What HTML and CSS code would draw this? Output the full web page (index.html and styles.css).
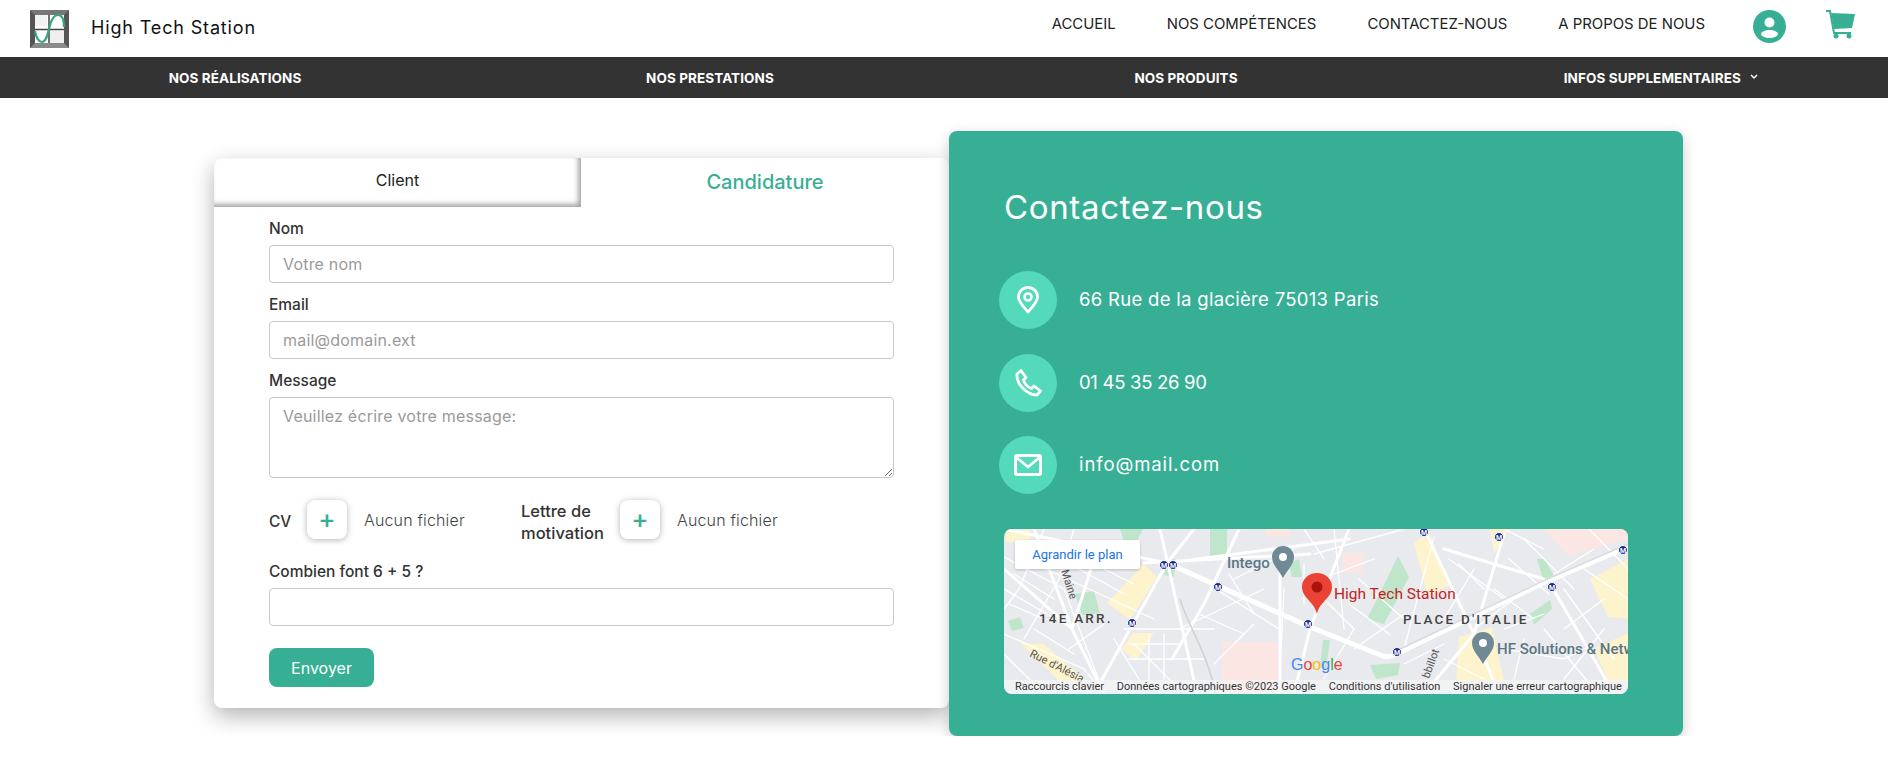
FILE: index.html
```html
<!DOCTYPE html>
<html lang="fr">
<head>
    <meta charset="UTF-8">
    <title>High Tech Station - Contactez-nous</title>
    <link rel="stylesheet" href="styles.css">
</head>
<body>
    <header class="top-bar">
        <a class="brand" href="#">
            <svg class="brand-logo" viewBox="0 0 39 38">
                <rect width="39" height="38" fill="#555"/>
                <polygon points="0,0 39,0 34,5 5,5" fill="#777"/>
                <polygon points="0,38 39,38 34,33 5,33" fill="#8a8a8a"/>
                <rect x="5" y="5" width="29" height="28" fill="#fff"/>
                <rect x="5" y="5" width="12" height="11" fill="#f2f2f2"/>
                <rect x="20" y="21" width="14" height="12" fill="#efefef"/>
                <path d="M19 5V33M5 19.500H34" stroke="#444" stroke-width="1.500"/>
                <path d="M5 21C6 28 9 32 12 32C16 32 17.500 25 19 19C20.500 12 23 5 28 5C32 5 34 10 34 17" fill="none" stroke="#36a67e" stroke-width="2.200"/>
            </svg>
            <span class="brand-name">High Tech Station</span>
        </a>
        <nav class="main-nav">
            <a href="#">ACCUEIL</a>
            <a href="#">NOS COMPÉTENCES</a>
            <a href="#">CONTACTEZ-NOUS</a>
            <a href="#">A PROPOS DE NOUS</a>
        </nav>
        <svg class="avatar" viewBox="0 0 33 33">
            <circle cx="16.500" cy="16.500" r="16.500" fill="#37af95"/>
            <circle cx="16.500" cy="12.500" r="5" fill="#fff"/>
            <ellipse cx="16.500" cy="24" rx="8.500" ry="4" fill="#fff"/>
        </svg>
        <svg class="cart" viewBox="0 0 29 29">
            <path d="M0 1H4L8 23H25" fill="none" stroke="#37af95" stroke-width="2"/>
            <polygon points="5,3 29,4 26,18 8,19" fill="#37af95"/>
            <circle cx="10" cy="26" r="2.500" fill="#37af95"/>
            <circle cx="23" cy="26" r="2.500" fill="#37af95"/>
        </svg>
    </header>

    <nav class="sub-nav">
        <a href="#">NOS RÉALISATIONS</a>
        <a href="#">NOS PRESTATIONS</a>
        <a href="#">NOS PRODUITS</a>
        <a href="#">INFOS SUPPLEMENTAIRES
            <svg class="chevron" viewBox="0 0 8 6"><path d="M1 1L4 4L7 1" fill="none" stroke="#fff" stroke-width="1.500"/></svg>
        </a>
    </nav>

    <main class="contact">
        <section class="form-card">
            <div class="tabs">
                <div class="tab">Client</div>
                <div class="tab tab-active">Candidature</div>
            </div>
            <form class="form-body">
                <div class="field">
                    <label for="nom">Nom</label>
                    <input type="text" id="nom" placeholder="Votre nom">
                </div>
                <div class="field">
                    <label for="email">Email</label>
                    <input type="text" id="email" placeholder="mail@domain.ext">
                </div>
                <div class="field">
                    <label for="message">Message</label>
                    <textarea id="message" placeholder="Veuillez écrire votre message:"></textarea>
                </div>
                <div class="file-row">
                    <div class="file-item file-cv">
                        <span class="file-label">CV</span>
                        <span class="file-btn">+</span>
                        <span class="file-name">Aucun fichier</span>
                    </div>
                    <div class="file-item">
                        <span class="file-label file-label-long">Lettre de<br>motivation</span>
                        <span class="file-btn">+</span>
                        <span class="file-name">Aucun fichier</span>
                    </div>
                </div>
                <div class="field">
                    <label for="captcha">Combien font 6 + 5 ?</label>
                    <input type="text" id="captcha">
                </div>
                <button type="button" class="send-btn">Envoyer</button>
            </form>
        </section>

        <section class="info-panel">
            <h2>Contactez-nous</h2>
            <div class="info-row">
                <span class="info-icon">
                    <svg viewBox="0 0 24 28"><path d="M12 26C7 20 2.500 16 2.500 11A9.500 9.500 0 0 1 21.500 11C21.500 16 17 20 12 26Z" fill="none" stroke="#fff" stroke-width="2.800" stroke-linejoin="round"/><circle cx="12" cy="11" r="3.500" fill="none" stroke="#fff" stroke-width="2.600"/></svg>
                </span>
                <span class="info-text">66 Rue de la glacière 75013 Paris</span>
            </div>
            <div class="info-row">
                <span class="info-icon">
                    <svg viewBox="0 0 28 28"><path d="M3 5L7 1.500L12 8.500L9.500 11C10.500 15 13.500 18 17.500 19.500L20 17L26.500 22L23 26C13 26 2 15 3 5Z" fill="none" stroke="#fff" stroke-width="2.800" stroke-linejoin="round"/></svg>
                </span>
                <span class="info-text info-phone">01 45 35 26 90</span>
            </div>
            <div class="info-row">
                <span class="info-icon">
                    <svg viewBox="0 0 28 22"><rect x="1.500" y="1.500" width="25" height="19" rx="1.500" fill="none" stroke="#fff" stroke-width="3"/><path d="M2 3L14 13L26 3" fill="none" stroke="#fff" stroke-width="2.800"/></svg>
                </span>
                <span class="info-text info-mail">info@mail.com</span>
            </div>

            <div class="map">
                <svg class="map-canvas" viewBox="0 0 624 165">
                    <rect width="624" height="165" fill="#e8eaed"/>
                    <g fill="#fdf3cd">
                        <polygon points="140,35 153,48 126,91 103,74"/>
                        <polygon points="129,104 150,104 132,132 118,120"/>
                        <polygon points="16,114 40,115 82,152 55,152"/>
                        <polygon points="2,1 26,1 26,11 2,14"/>
                        <polygon points="410,14 425,3 446,56 424,68"/>
                        <polygon points="455,108 488,98 500,152 452,152"/>
                        <polygon points="586,50 624,30 624,90 604,88"/>
                        <polygon points="590,120 624,104 624,152 604,152"/>
                        <polygon points="486,0 506,0 490,24"/>
                    </g>
                    <g fill="#fce6e4">
                        <rect x="218" y="113" width="56" height="52"/>
                        <rect x="262" y="0" width="24" height="8"/>
                        <rect x="339" y="24" width="20" height="20"/>
                        <polygon points="539,0 624,0 624,10 565,27"/>
                    </g>
                    <g fill="#bfe6ca">
                        <rect x="206" y="0" width="17" height="28"/>
                        <polygon points="116,0 139,0 132,14 120,12"/>
                        <polygon points="71,65 90,62 96,84 78,86"/>
                        <polygon points="4,92 16,88 20,99 8,102"/>
                        <polygon points="363,90 378,60 394,27 405,48 380,95"/>
                        <polygon points="533,30 540,30 552,50 540,54"/>
                        <polygon points="526,85 546,71 548,80 530,96"/>
                        <polygon points="366,136 396,134 394,146 372,150"/>
                        <polygon points="319,111 326,111 322,140 316,138"/>
                        <polygon points="164,30 172,30 170,48 160,46"/>
                        <polygon points="285,34 295,30 298,48 288,48"/>
                    </g>
                    <g fill="none" stroke="#fff" stroke-linecap="round" stroke-width="1.300">
                        <path d="M0 28L60 60L96 154M40 0L15 60L0 80M70 0L55 50L20 110M0 105L80 140L100 165"/>
                        <path d="M20 30L150 90M30 15L120 65M60 20L130 55M0 60L60 95M0 125L40 165M120 100L210 100M125 130L200 130M130 115L170 155"/>
                        <path d="M175 100L260 60M215 62L275 100M250 95L210 135M230 50L290 20M300 0L320 30M280 60L275 165"/>
                        <path d="M330 0L340 100M310 25L400 0M355 50L400 90M310 60L350 100M430 8L400 120M445 30L500 70M470 40L440 90M490 60L530 90M520 10L570 60"/>
                        <path d="M560 60L610 130M580 40L624 70M600 100L560 150M540 100L590 160M500 100L540 85M440 130L480 150M540 20L500 0M585 0L624 40"/>
                        <path d="M10 45L50 70M5 75L40 90M30 100L70 125M65 120L100 95M75 40L110 20M110 110L135 150M145 105L145 150M160 105L160 150M125 115L175 115"/>
                        <path d="M195 85L240 105M225 45L250 85M300 35L300 75M330 45L370 30M345 75L385 105M350 120L400 85M350 100L320 150M400 135L440 115"/>
                        <path d="M455 35L480 60M505 30L545 65M510 70L470 100M560 100L600 70M590 20L550 45M500 120L560 130M520 110L510 150M560 130L590 115"/>
                    </g>
                    <g fill="none" stroke="#fff" stroke-linecap="round" stroke-width="3">
                        <path d="M156 0L193 165"/>
                        <path d="M163 34L96 154"/>
                        <path d="M190 0L163 34L0 0"/>
                        <path d="M140 34L306 25M163 34L345 10"/>
                        <path d="M235 0L200 75L168 130"/>
                        <path d="M0 40L68 100L100 165M68 100L90 30M30 0L68 100"/>
                        <path d="M276 40L276 165M345 0L306 100L290 165"/>
                        <path d="M420 0L470 105L495 165"/>
                        <path d="M500 5L470 105L420 165M540 50L440 20"/>
                        <path d="M548 58L590 130L610 165"/>
                    </g>
                    <path d="M163 34L306 98L379 127Q386 129 392 125L539 54L624 18" fill="none" stroke="#fff" stroke-width="5"/>
                    <path d="M392 122L539 52L624 15" fill="none" stroke="#d9dbe0" stroke-width="1.500"/>
                    <path d="M176 70C185 100 200 115 212 165" fill="none" stroke="#cfd1d6" stroke-width="1.500"/>

                    <g class="metro" transform="translate(160 36)"><circle r="4.500"/><text y="2.500">M</text></g>
                    <g class="metro" transform="translate(169 36)"><circle r="4.500"/><text y="2.500">M</text></g>
                    <g class="metro" transform="translate(214 58)"><circle r="4.500"/><text y="2.500">M</text></g>
                    <g class="metro" transform="translate(128 94)"><circle r="4.500"/><text y="2.500">M</text></g>
                    <g class="metro" transform="translate(304 95)"><circle r="4.500"/><text y="2.500">M</text></g>
                    <g class="metro" transform="translate(420 3)"><circle r="4.500"/><text y="2.500">M</text></g>
                    <g class="metro" transform="translate(495 8)"><circle r="4.500"/><text y="2.500">M</text></g>
                    <g class="metro" transform="translate(619 21)"><circle r="4.500"/><text y="2.500">M</text></g>
                    <g class="metro" transform="translate(548 58)"><circle r="4.500"/><text y="2.500">M</text></g>
                    <g class="metro" transform="translate(393 123)"><circle r="4.500"/><text y="2.500">M</text></g>

                    <path d="M279 49C275 41 268 36 268 28A11 11 0 0 1 290 28C290 36 283 41 279 49Z" fill="#6f8a96"/>
                    <circle cx="279" cy="28" r="4" fill="#fff"/>
                    <path d="M479 135C475 127 468 122 468 114A11 11 0 0 1 490 114C490 122 483 127 479 135Z" fill="#6f8a96"/>
                    <circle cx="479" cy="114" r="4" fill="#fff"/>
                    <path d="M313 85C310 72 298 69 298 58A15 14 0 1 1 328 58C328 69 316 72 313 85Z" fill="#ea4335"/>
                    <circle cx="313" cy="58" r="5.500" fill="#a81410"/>

                    <text class="map-place" x="223" y="39">Intego</text>
                    <text class="map-place" x="493" y="125">HF Solutions &amp; Netw</text>
                    <text class="map-pin-label" x="330" y="70">High Tech Station</text>
                    <text class="map-area" x="35" y="94">14E ARR.</text>
                    <text class="map-area" x="399" y="95">PLACE D'ITALIE</text>
                    <text class="map-street" transform="translate(57 42) rotate(72)">Maine</text>
                    <text class="map-street" transform="translate(25 127) rotate(27)">Rue d'Alésia</text>
                    <text class="map-street" transform="translate(425 150) rotate(-70)">bbillot</text>
                    <text class="map-logo" x="287" y="141"><tspan fill="#4285f4">G</tspan><tspan fill="#ea4335">o</tspan><tspan fill="#fbbc05">o</tspan><tspan fill="#4285f4">g</tspan><tspan fill="#34a853">l</tspan><tspan fill="#ea4335">e</tspan></text>
                </svg>
                <a class="map-enlarge" href="#">Agrandir le plan</a>
                <div class="map-footer">
                    <span>Raccourcis clavier</span>
                    <span>Données cartographiques ©2023 Google</span>
                    <span>Conditions d'utilisation</span>
                    <span>Signaler une erreur cartographique</span>
                </div>
            </div>
        </section>
    </main>
</body>
</html>
```

FILE: styles.css
```css
body {
    margin: 0;
    font-family: Inter, "Open Sans", sans-serif;
    background-color: #fff;
    color: #222;
}
a {
    color: inherit;
    text-decoration: none;
}

/* top bar */
.top-bar {
    display: flex;
    align-items: center;
    height: 57px;
    padding: 0 33px 0 30px;
}
.brand {
    display: flex;
    align-items: center;
    gap: 22px;
    margin-bottom: 3px;
}
.brand-logo {
    width: 39px;
    height: 38px;
    margin-top: 3px;
}
.brand-name {
    font-size: 18px;
    letter-spacing: 0.85px;
    color: #111;
}
.main-nav {
    display: flex;
    gap: 51px;
    margin-left: auto;
    margin-bottom: 9px;
    font-size: 14.900px;
    color: #222;
}
.avatar {
    width: 33px;
    height: 33px;
    margin-left: 48px;
    margin-bottom: 4px;
}
.cart {
    width: 29px;
    height: 29px;
    margin-left: 40px;
    margin-bottom: 9px;
}

/* dark menu */
.sub-nav {
    display: grid;
    grid-template-columns: 470px 470px 472px 1fr;
    column-gap: 5px;
    align-items: center;
    height: 41px;
    background-color: #333;
    color: #fff;
    font-size: 13.500px;
    font-weight: 700;
    letter-spacing: 0.1px;
    text-align: center;
}
.sub-nav a:last-child {
    padding-left: 7px;
}
.chevron {
    width: 8px;
    height: 6px;
    margin-left: 6px;
    vertical-align: 3px;
}

/* contact section */
.contact {
    display: flex;
    align-items: flex-start;
    padding: 33px 0 0 214px;
}
.form-card {
    width: 735px;
    margin-top: 27px;
    background-color: #fff;
    border-radius: 8px;
    box-shadow: 0 8px 22px rgba(0, 0, 0, 0.3);
}
.tabs {
    display: flex;
    height: 49px;
}
.tab {
    width: 367px;
    padding-top: 12px;
    box-sizing: border-box;
    text-align: center;
    font-size: 16px;
    border-top-left-radius: 8px;
    box-shadow: inset -3px -3px 5px rgba(0, 0, 0, 0.35);
}
.tab-active {
    flex: 1;
    font-size: 20px;
    font-weight: 500;
    color: #37af95;
    border-radius: 0;
    box-shadow: none;
}
.form-body {
    padding: 12px 55px 21px;
}
.field {
    margin-bottom: 12px;
}
.field label {
    display: block;
    height: 20px;
    margin-bottom: 6px;
    font-size: 15.500px;
    font-weight: 500;
    line-height: 20px;
    color: #333;
}
.field input,
.field textarea {
    display: block;
    width: 100%;
    height: 38px;
    padding: 0 13px;
    box-sizing: border-box;
    border: 1px solid #c9c9c9;
    border-radius: 4px;
    font-family: inherit;
    font-size: 16px;
    letter-spacing: 0.2px;
    color: #333;
}
.field textarea {
    height: 81px;
    padding-top: 8px;
}
::placeholder {
    color: #9a9a9a;
    opacity: 1;
}
.file-row {
    display: flex;
    height: 39px;
    margin: 22px 0 23px;
}
.file-item {
    display: flex;
    align-items: center;
    font-size: 15.500px;
}
.file-cv {
    width: 252px;
}
.file-label {
    width: 38px;
    padding-top: 4px;
    font-weight: 500;
    line-height: 22px;
    color: #333;
}
.file-label-long {
    width: 99px;
    font-size: 16.500px;
}
.file-btn {
    width: 40px;
    height: 39px;
    border-radius: 8px;
    background-color: #fff;
    box-shadow: 0 1px 6px rgba(0, 0, 0, 0.3);
    color: #37af95;
    font-size: 26px;
    font-weight: 500;
    line-height: 38px;
    text-align: center;
}
.file-name {
    margin-left: 17px;
    color: #444;
    font-size: 16px;
    font-weight: 300;
    letter-spacing: 0.15px;
}
.send-btn {
    display: block;
    width: 105px;
    height: 39px;
    margin-top: 22px;
    border: 0;
    border-radius: 8px;
    background-color: #37af95;
    color: #fff;
    font-family: inherit;
    font-size: 16px;
}

/* green panel */
.info-panel {
    position: relative;
    width: 734px;
    box-sizing: border-box;
    padding: 56px 55px 42px;
    background-color: #37af95;
    border-radius: 8px;
    box-shadow: 0 4px 14px rgba(0, 0, 0, 0.2);
    color: #fff;
}
.info-panel h2 {
    margin: 0 0 44px;
    font-size: 33px;
    font-weight: 400;
    line-height: 40px;
    letter-spacing: 0.65px;
}
.info-row {
    display: flex;
    align-items: center;
    gap: 22px;
    margin: 0 0 24.500px -5px;
    font-size: 18.500px;
    letter-spacing: 0.3px;
}
.info-text {
    padding-bottom: 2px;
}
.info-phone {
    letter-spacing: -0.3px;
}
.info-mail {
    letter-spacing: 0.9px;
}
.info-icon {
    display: flex;
    align-items: center;
    justify-content: center;
    width: 58px;
    height: 58px;
    border-radius: 50%;
    background-color: #54d9ba;
}
.info-icon svg {
    width: 28px;
    height: 28px;
}

/* map */
.map {
    position: relative;
    height: 165px;
    margin-top: 35px;
    border-radius: 8px;
    overflow: hidden;
    font-family: Roboto, sans-serif;
}
.map-canvas {
    display: block;
    width: 624px;
    height: 165px;
}
.metro circle {
    fill: #1f2a8c;
    stroke: #fff;
    stroke-width: 1;
}
.metro text {
    fill: #fff;
    font-size: 7px;
    font-weight: 700;
    text-anchor: middle;
}
.map-place {
    fill: #5b7785;
    font-size: 15px;
    font-weight: 500;
}
.map-pin-label {
    fill: #c5221f;
    font-size: 15.500px;
}
.map-area {
    fill: #444;
    font-size: 13.500px;
    font-weight: 500;
    letter-spacing: 2.200px;
}
.map-street {
    fill: #555;
    font-size: 11px;
}
.map-logo {
    font-family: "Liberation Sans", sans-serif;
    font-size: 16px;
}
.map-enlarge {
    position: absolute;
    left: 11px;
    top: 11px;
    width: 125px;
    height: 29px;
    border-radius: 2px;
    background-color: #fff;
    box-shadow: 0 1px 3px rgba(0, 0, 0, 0.2);
    color: #1a73e8;
    font-size: 13px;
    line-height: 29px;
    text-align: center;
}
.map-footer {
    position: absolute;
    left: 0;
    right: 0;
    bottom: 0;
    display: flex;
    justify-content: space-between;
    height: 14px;
    padding: 0 6px 0 11px;
    background-color: rgba(245, 245, 245, 0.7);
    color: #333;
    font-size: 11px;
    line-height: 14px;
}
```
